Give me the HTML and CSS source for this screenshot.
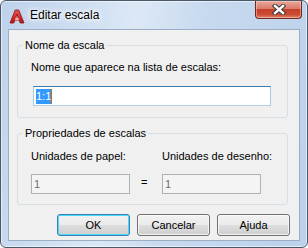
FILE: index.html
```html
<!DOCTYPE html>
<html lang="pt">
<head>
    <meta charset="UTF-8">
    <title>Editar escala</title>
    <link rel="stylesheet" href="styles.css">
</head>
<body>
    <div class="window">
        <div class="titlebar">
            <svg class="app-icon" width="16" height="16" viewBox="0 0 16 16">
                <defs>
                    <linearGradient id="red" x1="0" y1="0" x2="0" y2="1">
                        <stop offset="0" stop-color="#f05050"/>
                        <stop offset="1" stop-color="#b81414"/>
                    </linearGradient>
                </defs>
                <path d="M1 15 L6.2 2 L9.8 2 L15 15 L11.2 15 L10.2 12.2 L5.8 12.2 L4.8 15 Z M6.8 9.6 L9.2 9.6 L8 6 Z" fill="url(#red)" fill-rule="evenodd" stroke="#8c1010" stroke-width="0.8"/>
                <path d="M5.8 12.2 L10.2 12.2 L9.2 9.6 L6.8 9.6 Z" fill="#f4b0a8"/>
            </svg>
            <span class="title">Editar escala</span>
            <div class="close-btn">
                <svg width="14" height="11" viewBox="0 0 14 11">
                    <path d="M3 2 L11 9 M11 2 L3 9" stroke="#3b3b3b" stroke-width="4.4" stroke-linecap="square"/>
                    <path d="M3 2 L11 9 M11 2 L3 9" stroke="#ffffff" stroke-width="2.4" stroke-linecap="square"/>
                </svg>
            </div>
        </div>

        <div class="client">
            <fieldset class="group">
                <legend>Nome da escala</legend>
                <div class="label">Nome que aparece na lista de escalas:</div>
                <div class="textbox focused name-box"><span class="sel">1:1</span><span class="caret"></span></div>
            </fieldset>

            <fieldset class="group">
                <legend>Propriedades de escalas</legend>
                <div class="units">
                    <div class="unit">
                        <div class="label">Unidades de papel:</div>
                        <div class="textbox disabled">1</div>
                    </div>
                    <div class="equals">=</div>
                    <div class="unit">
                        <div class="label">Unidades de desenho:</div>
                        <div class="textbox disabled">1</div>
                    </div>
                </div>
            </fieldset>

            <div class="buttons">
                <button class="btn default">OK</button>
                <button class="btn">Cancelar</button>
                <button class="btn">Ajuda</button>
            </div>
        </div>
    </div>
</body>
</html>
```

FILE: styles.css
```css
body {
    margin: 0;
    padding: 0;
    background: #fff;
    font-family: "Liberation Sans", Arial, sans-serif;
    font-size: 11px;
}
.window {
    width: 308px;
    height: 248px;
    box-sizing: border-box;
    border: 1px solid #4b5868;
    border-radius: 6px;
    padding: 0 7px 6px 7px;
    background: linear-gradient(100deg, #bed2eb 0%, #d3e2f3 30%, #dce8f5 40%, #c6d9ef 60%, #bcd1ea 100%);
    box-shadow: inset 0 0 0 1px rgba(255, 255, 255, 0.55);
}
.titlebar {
    height: 28px;
    display: flex;
    align-items: flex-start;
}
.app-icon {
    margin: 7px 0 0 1px;
}
.title {
    margin: 7px 0 0 5px;
    font-size: 12px;
    line-height: 15px;
    color: #000;
    text-shadow: 0 0 6px #fff, 0 0 6px #fff, 0 0 3px #fff;
}
.close-btn {
    margin-left: auto;
    margin-right: -2px;
    width: 47px;
    height: 18px;
    box-sizing: border-box;
    border: 1px solid #6e2a22;
    border-top: none;
    border-radius: 0 0 4px 4px;
    background: linear-gradient(#e9a99c 0%, #db7b68 45%, #c4402b 50%, #cc4b33 80%, #e08a6e 100%);
    box-shadow: inset 0 0 0 1px rgba(255, 220, 210, 0.45);
    display: flex;
    align-items: center;
    justify-content: center;
}
.client {
    height: 212px;
    box-sizing: border-box;
    border: 1px solid #9aaec6;
    background: #f0f0f0;
    padding: 9px 11px 0 8px;
}
.group {
    margin: 0;
    padding: 0 0 10px 0;
    border: 1px solid #d5dfe5;
    border-radius: 3px;
    min-width: 0;
}
.group + .group {
    margin-top: 9px;
}
.group:first-child {
    padding-bottom: 11px;
}
.group legend {
    margin-left: 5px;
    padding: 0 2px;
    line-height: 13px;
    color: #000;
}
.label {
    line-height: 13px;
    color: #000;
    margin: 9px 0 0 13px;
}
.textbox {
    height: 20px;
    box-sizing: border-box;
    display: flex;
    align-items: center;
    padding-left: 2px;
    line-height: 13px;
}
.name-box {
    margin: 12px 0 0 15px;
    width: 238px;
}
.focused {
    background: #fff;
    border: 1px solid #b6cfe6;
    border-top-color: #3d7bad;
    border-left-color: #a8c8e3;
    border-right-color: #a8c8e3;
}
.sel {
    background: #3399ff;
    color: #fff;
    height: 15px;
    line-height: 15px;
}
.caret {
    width: 1px;
    height: 15px;
    background: #cc6600;
}
.units {
    display: flex;
    align-items: flex-end;
    margin-left: 13px;
}
.unit .label {
    margin: 10px 0 0 0;
}
.disabled {
    width: 99px;
    margin-top: 11px;
    border: 1px solid #adb2b5;
    background: #f4f4f4;
    color: #6d6d6d;
}
.equals {
    width: 32px;
    box-sizing: border-box;
    padding-left: 11px;
    height: 20px;
    line-height: 17px;
}
.buttons {
    display: flex;
    justify-content: flex-end;
    gap: 7px;
    margin-top: 9px;
    margin-right: -2px;
}
.btn {
    width: 73px;
    height: 22px;
    margin: 0;
    padding: 0;
    font-family: "Liberation Sans", Arial, sans-serif;
    font-size: 11px;
    color: #000;
    border: 1px solid #707070;
    border-radius: 3px;
    background: linear-gradient(#f2f2f2 0%, #ebebeb 48%, #dddddd 52%, #cfcfcf 100%);
    box-shadow: inset 0 0 0 1px rgba(255, 255, 255, 0.7);
}
.btn.default {
    border-color: #3c7fb1;
    box-shadow: inset 0 0 0 1px #48d8fb;
}
```
